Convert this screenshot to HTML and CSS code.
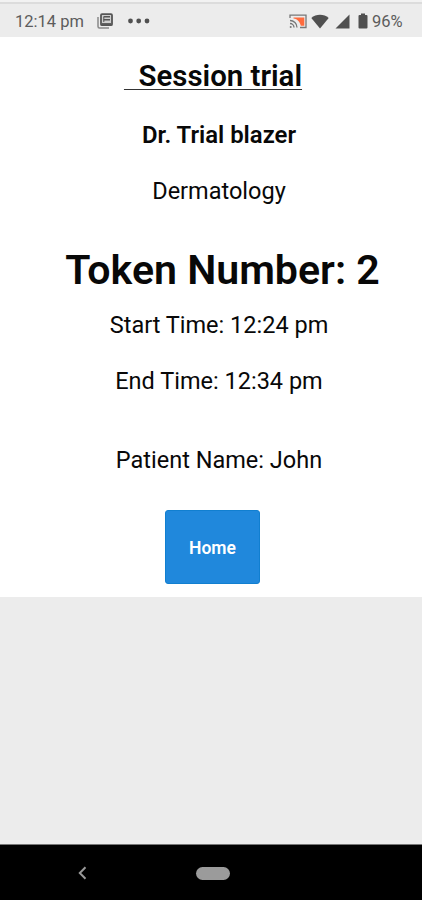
FILE: index.html
```html
<!DOCTYPE html>
<html lang="en">
<head>
<meta charset="utf-8">
<meta name="viewport" content="width=device-width, initial-scale=1">
<title>Session trial</title>
<link rel="stylesheet" href="styles.css">
</head>
<body>
<header class="status">
  <span class="clock">12:14 pm</span>
  <svg class="news" width="16" height="16" viewBox="0 0 16 16" fill="none" stroke="#555">
    <path d="M1 4v9.500a1.500 1.500 0 0 0 1.500 1.500H12" stroke="#888" stroke-width="1.500"/>
    <rect x="4" y="1.200" width="11" height="11" rx="1" fill="#cfcfcf" stroke-width="1.800"/>
    <path d="M6.500 3.800H13M6.500 6.700H13" stroke-width="1.400"/>
    <path d="M5 11h9" stroke-width="1.800"/>
    <path d="M6.800 4v5" stroke-width="1"/>
  </svg>
  <svg class="more" width="22" height="6" viewBox="0 0 22 6" fill="#505050">
    <circle cx="2.500" cy="3" r="2.400"/><circle cx="10.700" cy="3" r="2.400"/><circle cx="19" cy="3" r="2.400"/>
  </svg>
  <svg class="cast" width="18" height="15" viewBox="0 0 18 15" fill="none" stroke="#777" stroke-width="1.300">
    <path d="M4.500 3.500h10.800v8.300h-3.500C11.200 8 8.500 5 4.500 4.500z" fill="#ff6b3d" stroke="none"/>
    <path d="M1 4V1.200h16v12.300h-6M1 6.500a7 7 0 0 1 7 7M1 9.500a4 4 0 0 1 4 4"/>
    <circle cx="1.700" cy="13" r="1" fill="#777" stroke="none"/>
  </svg>
  <svg class="wifi" width="18" height="15" viewBox="0 0 18 15" fill="#505050">
    <path d="M9 14.500L.3 4C5-.3 13-.3 17.700 4z"/>
  </svg>
  <svg class="signal" width="15" height="15" viewBox="0 0 15 15"><path d="M14.500.500v14H.500z" fill="#505050"/></svg>
  <svg class="battery" width="10" height="16" viewBox="0 0 10 16" fill="#505050">
    <path d="M3 .500h4V2h1.500a1 1 0 0 1 1 1v11.500a1 1 0 0 1-1 1h-7a1 1 0 0 1-1-1V3a1 1 0 0 1 1-1H3z"/>
  </svg>
  <span class="percent">96%</span>
</header>
<main class="panel">
  <h1 class="title">&nbsp; Session trial</h1>
  <h2 class="line doctor">Dr. Trial blazer</h2>
  <p class="line specialty">Dermatology</p>
  <p class="token">Token Number: 2</p>
  <p class="line start">Start Time: 12:24 pm</p>
  <p class="line end">End Time: 12:34 pm</p>
  <p class="line patient">Patient Name: John</p>
  <button class="home" type="button">Home</button>
</main>
<nav class="navbar">
  <svg class="back" width="9" height="14" viewBox="0 0 9 14" fill="none" stroke="#999" stroke-width="2"><path d="M7.500 1.300L1.800 7l5.700 5.700"/></svg>
  <span class="pill"></span>
</nav>
</body>
</html>
```
FILE: styles.css
```css
* { box-sizing: border-box; }
body {
  margin: 0;
  height: 900px;
  display: flex;
  flex-direction: column;
  background: #ececec;
  color: #080808;
  font-family: Roboto, "Liberation Sans", sans-serif;
  overflow: hidden;
}
h1, h2, p { margin: 0; }
svg { display: block; flex: none; }
.status {
  height: 37px;
  flex: none;
  display: flex;
  align-items: center;
  padding: 5px 18px 0 15px;
  background: linear-gradient(#f2f2f2 2px, #dcdcdc 2px, #dcdcdc 4px, #ececec 4px);
  color: #5c5c5c;
  font-size: 16.500px;
  line-height: 20px;
  white-space: nowrap;
}
.clock { width: 82px; }
.clock, .percent { padding-top: 1px; }
.more { margin-left: 15px; }
.cast { margin-left: auto; }
.wifi { margin-left: 4px; }
.signal { margin-left: 6px; }
.battery { margin-left: 8px; }
.percent { width: 32px; margin-left: 4px; font-size: 16.500px; }
.panel {
  height: 560px;
  flex: none;
  padding: 25px 0 0;
  display: flex;
  flex-direction: column;
  align-items: center;
  background: #fff;
  white-space: nowrap;
}
.title {
  height: 28px;
  margin-left: 4px;
  font-size: 29.400px;
  line-height: 29px;
  font-weight: 600;
  text-decoration: underline #333;
  text-decoration-thickness: 1px;
  text-underline-offset: 3px;
}
.line {
  margin-left: 16px;
  font-size: 23.500px;
  line-height: 28px;
  font-weight: 400;
}
.doctor { margin-top: 31px; font-size: 23.900px; font-weight: 600; }
.specialty { margin-top: 28px; }
.token {
  margin: 41px 0 0 23px;
  font-size: 41.100px;
  line-height: 49px;
  font-weight: 600;
}
.start { margin-top: 16px; }
.end { margin-top: 28px; }
.patient { margin-top: 51px; }
.home {
  width: 95px;
  height: 74px;
  margin: 36px 0 0 3px;
  padding: 1px 0 0;
  border: 1px solid #117fd0;
  border-radius: 3px;
  background: #2088dc;
  color: #fff;
  font: 600 17.500px Roboto, "Liberation Sans", sans-serif;
}
.navbar {
  height: 56px;
  margin-top: auto;
  flex: none;
  display: flex;
  align-items: center;
  padding: 1px 0 0 78px;
  border-top: 1px solid #777;
  background: #000;
}
.pill {
  width: 34px;
  height: 13px;
  margin-left: 109px;
  border-radius: 7px;
  background: #9b9b9b;
}
```
